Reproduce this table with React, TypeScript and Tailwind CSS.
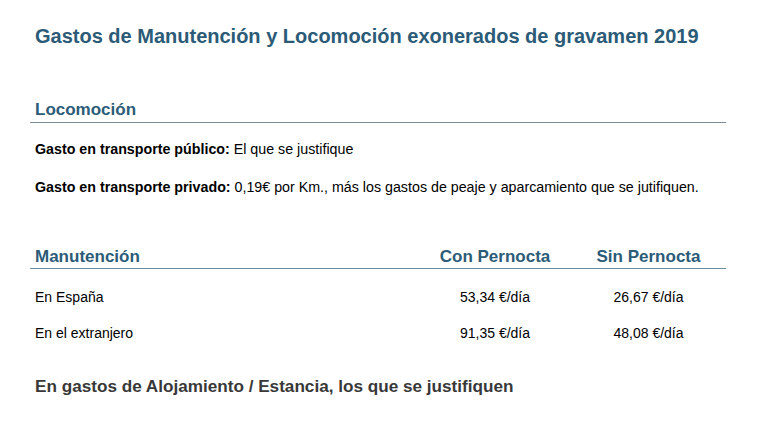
const rows = [
  { label: "En España", con: "53,34 €/día", sin: "26,67 €/día" },
  { label: "En el extranjero", con: "91,35 €/día", sin: "48,08 €/día" },
];

export default function App() {
  return (
    <div className="min-h-screen w-full bg-white font-['Liberation_Sans',Arial,sans-serif] text-black">
      <div className="ml-[30px] w-[696px] pt-[24px]">
        <h1 className="pl-[5px] text-[20px] font-bold leading-[24px] text-[#2b5b77]">
          Gastos de Manutención y Locomoción exonerados de gravamen 2019
        </h1>

        <h2 className="mt-[52px] border-b border-[#7d8a93] pb-[2px] pl-[5px] text-[17px] font-bold leading-[20px] text-[#2b5b77]">
          Locomoción
        </h2>
        <p className="mt-[18px] pl-[5px] text-[14.25px] leading-[16px]">
          <b>Gasto en transporte público:</b> El que se justifique
        </p>
        <p className="mt-[22px] pl-[5px] text-[14.25px] leading-[16px]">
          <b>Gasto en transporte privado:</b> 0,19€ por Km., más los gastos de peaje y aparcamiento que se jutifiquen.
        </p>

        <div className="mt-[52px] flex border-b border-[#6b8c9c] pb-[1px] text-[17px] font-bold leading-[20px] text-[#2b5b77]">
          <div className="flex-1 pl-[5px]">Manutención</div>
          <div className="w-[155px] pl-[3px] text-center">Con Pernocta</div>
          <div className="w-[155px] text-center">Sin Pernocta</div>
        </div>
        <div className="mt-[20px] flex flex-col gap-[20px] text-[14px] leading-[16px]">
          {rows.map((r) => (
            <div key={r.label} className="flex">
              <div className="flex-1 pl-[5px]">{r.label}</div>
              <div className="w-[155px] pl-[3px] text-center">{r.con}</div>
              <div className="w-[155px] text-center">{r.sin}</div>
            </div>
          ))}
        </div>

        <p className="mt-[35px] pl-[5px] text-[17.15px] font-bold leading-[20px] text-[#383838]">
          En gastos de Alojamiento / Estancia, los que se justifiquen
        </p>
      </div>
    </div>
  );
}
